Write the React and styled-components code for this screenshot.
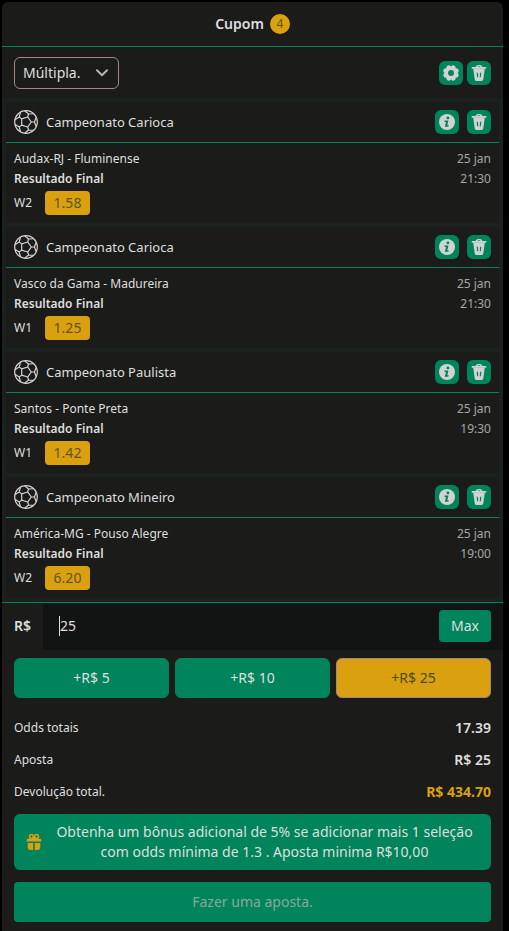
import React, { useState } from "react";
import styled, { createGlobalStyle } from "styled-components";

const bets = [
  { id: 1, league: "Campeonato Carioca", match: "Audax-RJ - Fluminense", date: "25 jan", time: "21:30", pick: "W2", odd: "1.58" },
  { id: 2, league: "Campeonato Carioca", match: "Vasco da Gama - Madureira", date: "25 jan", time: "21:30", pick: "W1", odd: "1.25" },
  { id: 3, league: "Campeonato Paulista", match: "Santos - Ponte Preta", date: "25 jan", time: "19:30", pick: "W1", odd: "1.42" },
  { id: 4, league: "Campeonato Mineiro", match: "América-MG - Pouso Alegre", date: "25 jan", time: "19:00", pick: "W2", odd: "6.20" },
];

const quickStakes = [5, 10, 25];

const point = (c, r, deg) => {
  const a = (deg * Math.PI) / 180;
  return `${(c + r * Math.cos(a)).toFixed(2)} ${(c + r * Math.sin(a)).toFixed(2)}`;
};

const seams = [0, 72, 144, 216, 288]
  .map(
    (a) =>
      `M${point(12, 5.3, a)}L${point(12, 5.3, a + 72)}` +
      `M${point(12, 5.3, a)}L${point(12, 8.4, a)}` +
      `M${point(12, 11.3, a - 25)}L${point(12, 8.4, a)}L${point(12, 11.3, a + 25)}`
  )
  .join("");

const BallIcon = () => (
  <svg width="24" height="24" viewBox="0 0 24 24" fill="none" stroke="#d2d2d2" aria-hidden="true">
    <circle cx="12" cy="12" r="11.3" strokeWidth="1.2" />
    <path d={seams} strokeWidth="1.2" strokeLinejoin="round" />
  </svg>
);

// eight rounded teeth, two of them flanking the top
const gearEdge = Array.from({ length: 8 }, (_, i) => {
  const a = i * 45;
  return `${i ? "L" : "M"}${point(8, 6.6, a)}L${point(8, 7.9, a + 11)}Q${point(8, 8.4, a + 22.5)} ${point(8, 7.9, a + 34)}`;
}).join("");

const GearIcon = () => (
  <svg width="16" height="16" viewBox="0 0 16 16" fill="currentColor" aria-hidden="true">
    <path fillRule="evenodd" d={`${gearEdge}ZM8 5a3 3 0 1 0 0 6 3 3 0 0 0 0-6Z`} />
  </svg>
);

const TrashIcon = () => (
  <svg width="16" height="16" viewBox="0 0 16 16" fill="currentColor" aria-hidden="true">
    <path d="M4.6 2C5 .6 6.200 0 8 0s3 .6 3.400 2h3.100c.6 0 .9.400.9.900s-.3.900-.9.900h-13c-.6 0-.9-.4-.9-.9s.3-.9.9-.9Zm1.700 0h3.400C9.400 1.500 8.900 1.300 8 1.300S6.600 1.500 6.300 2Z" fillRule="evenodd" />
    <path d="M2.200 3.600h11.600l-1.500 10.600c-.2 1.200-.9 1.800-2.100 1.800H5.800c-1.200 0-1.900-.6-2.100-1.800ZM5.700 7.700l.4 4.600h1.100l-.2-4.600Zm3.300 0-.2 4.600h1.100l.4-4.600Z" fillRule="evenodd" />
  </svg>
);

const InfoIcon = () => (
  <svg width="16" height="16" viewBox="0 0 16 16" aria-hidden="true">
    <circle cx="8" cy="8" r="8" fill="currentColor" />
    <circle cx="8.900" cy="3.900" r="1.400" fill="#00845b" />
    <path d="M5.600 6.500h3.800L8.300 11.300h1.500l-.5 1.500H5.800L7 7.900H5.500Z" fill="#00845b" />
  </svg>
);

const GiftIcon = () => (
  <svg width="16" height="16" viewBox="0 0 16 16" aria-hidden="true">
    <g fill="none" stroke="#daa00f" strokeWidth="1.500">
      <circle cx="5.400" cy="2.500" r="1.900" />
      <circle cx="10.600" cy="2.500" r="1.900" />
      <path d="M8 5.200 6.800 3.600M8 5.200l1.200-1.600" />
    </g>
    <g fill="#daa00f">
      <path d="M2 4.700h12c.9 0 1.300.6 1.300 1.300v1.600H.7V6c0-.7.400-1.300 1.300-1.300Z" />
      <path d="M1.700 8.900h5.500V16H4.800c-2.200 0-3.100-1.200-3.100-3ZM8.800 8.900h5.500V13c0 1.800-.9 3-3.100 3H8.800Z" />
    </g>
  </svg>
);

const ChevronIcon = () => (
  <svg width="12" height="8" viewBox="0 0 12 8" fill="none" stroke="#b4b4b4" strokeWidth="2" aria-hidden="true">
    <path d="M1 1.200 6 6.200 11 1.200" strokeLinecap="round" strokeLinejoin="round" />
  </svg>
);

export default function App() {
  const [stake, setStake] = useState("25");

  return (
    <Page>
      <GlobalStyle />
      <Coupon>
        <Header>
          <Title>Cupom</Title>
          <Count>4</Count>
        </Header>

        <Toolbar>
          <TypeSelect>
            <select aria-label="Tipo de aposta" defaultValue="multipla">
              <option value="simples">Simples.</option>
              <option value="multipla">Múltipla.</option>
            </select>
            <ChevronIcon />
          </TypeSelect>
          <Actions $gap="4px">
            <IconButton aria-label="Configurações">
              <GearIcon />
            </IconButton>
            <IconButton aria-label="Limpar cupom">
              <TrashIcon />
            </IconButton>
          </Actions>
        </Toolbar>

        <BetList>
          {bets.map((bet) => (
            <BetCard key={bet.id}>
              <BetHeader>
                <BallIcon />
                <League>{bet.league}</League>
                <Actions $gap="8px">
                  <IconButton aria-label="Informações">
                    <InfoIcon />
                  </IconButton>
                  <IconButton aria-label="Remover">
                    <TrashIcon />
                  </IconButton>
                </Actions>
              </BetHeader>
              <BetBody>
                <BetLine>
                  <span>{bet.match}</span>
                  <When>{bet.date}</When>
                </BetLine>
                <BetLine>
                  <Market>Resultado Final</Market>
                  <When>{bet.time}</When>
                </BetLine>
                <PickLine>
                  <Pick>{bet.pick}</Pick>
                  <Odd>{bet.odd}</Odd>
                </PickLine>
              </BetBody>
            </BetCard>
          ))}
        </BetList>

        <StakeRow>
          <StakeLabel htmlFor="stake">R$</StakeLabel>
          <StakeField>
            <StakeInput id="stake" value={stake} onChange={(e) => setStake(e.target.value)} />
            <MaxButton>Max</MaxButton>
          </StakeField>
        </StakeRow>

        <QuickStakes>
          {quickStakes.map((value) => (
            <QuickButton key={value} $active={stake === String(value)} onClick={() => setStake(String(value))}>
              +R$ {value}
            </QuickButton>
          ))}
        </QuickStakes>

        <Summary>
          <SummaryRow>
            <dt>Odds totais</dt>
            <dd>17.39</dd>
          </SummaryRow>
          <SummaryRow>
            <dt>Aposta</dt>
            <dd>R$ 25</dd>
          </SummaryRow>
          <SummaryRow $highlight>
            <dt>Devolução total.</dt>
            <dd>R$ 434.70</dd>
          </SummaryRow>
        </Summary>

        <Bonus>
          <GiftIcon />
          <p>Obtenha um bônus adicional de 5% se adicionar mais 1 seleção com odds mínima de 1.3 . Aposta minima R$10,00</p>
        </Bonus>

        <SubmitButton disabled>Fazer uma aposta.</SubmitButton>
      </Coupon>
    </Page>
  );
}

const GlobalStyle = createGlobalStyle`
  * {
    box-sizing: border-box;
    margin: 0;
    padding: 0;
  }

  body {
    background-color: #000;
    color: #dfdfdf;
    font-family: "Noto Sans", "Open Sans", sans-serif;
    font-size: 14px;
    line-height: 20px;
  }

  button, input, select {
    font: inherit;
    color: inherit;
    border: none;
  }

  button {
    cursor: pointer;
  }
`;

const Page = styled.main`
  padding: 2px 6px 0 2px;
`;

const Coupon = styled.section`
  min-height: calc(100vh - 2px);
  padding-bottom: 8px;
  background-color: #1b1c1a;
  border-radius: 6px 6px 0 0;
`;

const Header = styled.header`
  display: flex;
  align-items: center;
  justify-content: center;
  gap: 6px;
  height: 45px;
  border-bottom: 1px solid #00845b;
`;

const Title = styled.h1`
  font-size: 14px;
  font-weight: 600;
`;

const Count = styled.span`
  width: 20px;
  height: 20px;
  border-radius: 50%;
  background-color: #daa00f;
  color: #5e5620;
  font-size: 12px;
  text-align: center;
`;

const Toolbar = styled.div`
  display: flex;
  align-items: center;
  justify-content: space-between;
  padding: 10px 12px 9px;
`;

const TypeSelect = styled.div`
  display: grid;
  align-items: center;

  select {
    grid-area: 1 / 1;
    appearance: none;
    width: 105px;
    height: 32px;
    padding: 0 32px 0 8px;
    background: transparent;
    border: 1px solid #a38786;
    border-radius: 6px;
    cursor: pointer;
  }

  option {
    background-color: #1b1c1a;
  }

  svg {
    grid-area: 1 / 1;
    justify-self: end;
    margin-right: 11px;
    pointer-events: none;
  }
`;

const Actions = styled.div`
  display: flex;
  gap: ${({ $gap }) => $gap};
`;

const IconButton = styled.button`
  display: flex;
  align-items: center;
  justify-content: center;
  width: 24px;
  height: 24px;
  border-radius: 6px;
  background-color: #00845b;
  color: #d2d2d2;
`;

const BetList = styled.div`
  display: flex;
  flex-direction: column;
  gap: 4px;
  padding: 4px;
  background-color: #1a211e;
`;

const BetCard = styled.article`
  background-color: #1b1c1a;
  border-radius: 4px;
`;

const BetHeader = styled.div`
  display: flex;
  align-items: center;
  gap: 8px;
  height: 41px;
  padding: 0 8px;
  border-bottom: 1px solid #00845b;
`;

const League = styled.h2`
  flex: 1;
  font-size: 13px;
  font-weight: 400;
`;

const BetBody = styled.div`
  padding: 6px 8px 8px;
  font-size: 12px;
`;

const BetLine = styled.div`
  display: flex;
  justify-content: space-between;
`;

const Market = styled.span`
  font-weight: 600;
`;

const When = styled.time`
  color: #a5a5a4;
`;

const PickLine = styled.div`
  display: flex;
  align-items: center;
  padding-top: 2px;
`;

const Pick = styled.span`
  width: 31px;
`;

const Odd = styled.span`
  min-width: 45px;
  padding: 2px 4px;
  border-radius: 4px;
  background-color: #daa00f;
  color: #5e5620;
  font-size: 14px;
  text-align: center;
`;

const StakeRow = styled.div`
  display: flex;
  border-top: 1px solid #00845b;
`;

const StakeLabel = styled.label`
  width: 41px;
  padding: 13px 0 14px 12px;
  font-weight: 600;
`;

const StakeField = styled.div`
  flex: 1;
  display: flex;
  align-items: center;
  padding: 0 12px 1px 16px;
  background-color: #121413;
`;

const StakeInput = styled.input`
  flex: 1;
  min-width: 0;
  height: 20px;
  background: transparent;
  border-left: 1px solid #dfdfdf;
  outline: none;
`;

const MaxButton = styled.button`
  height: 32px;
  padding: 0 12px;
  border-radius: 4px;
  background-color: #00845b;
`;

const QuickStakes = styled.div`
  display: grid;
  grid-template-columns: repeat(3, 1fr);
  gap: 6px;
  padding: 8px 12px 14px;
`;

const QuickButton = styled.button`
  height: 40px;
  border: 1px solid ${({ $active }) => ($active ? "#a38786" : "#00845b")};
  border-radius: 6px;
  background-color: ${({ $active }) => ($active ? "#daa00f" : "#00845b")};
  color: ${({ $active }) => ($active ? "#4a4c20" : "inherit")};
`;

const Summary = styled.dl`
  padding: 0 12px;
`;

const SummaryRow = styled.div`
  display: flex;
  justify-content: space-between;
  align-items: center;
  height: 32px;

  dt {
    font-size: 12px;
  }

  dd {
    font-weight: ${({ $highlight }) => ($highlight ? 700 : 600)};
    color: ${({ $highlight }) => ($highlight ? "#daa00f" : "inherit")};
  }
`;

const Bonus = styled.div`
  display: flex;
  align-items: center;
  gap: 12px;
  margin: 6px 12px 12px;
  padding: 8px 16px 8px 12px;
  border-radius: 6px;
  background-color: #00845b;

  svg {
    flex-shrink: 0;
  }

  p {
    flex: 1;
    text-align: center;
  }
`;

const SubmitButton = styled.button`
  display: block;
  width: calc(100% - 24px);
  height: 40px;
  margin: 0 12px;
  border-radius: 4px;
  background-color: #00845b;
  color: #8ba79b;
`;
